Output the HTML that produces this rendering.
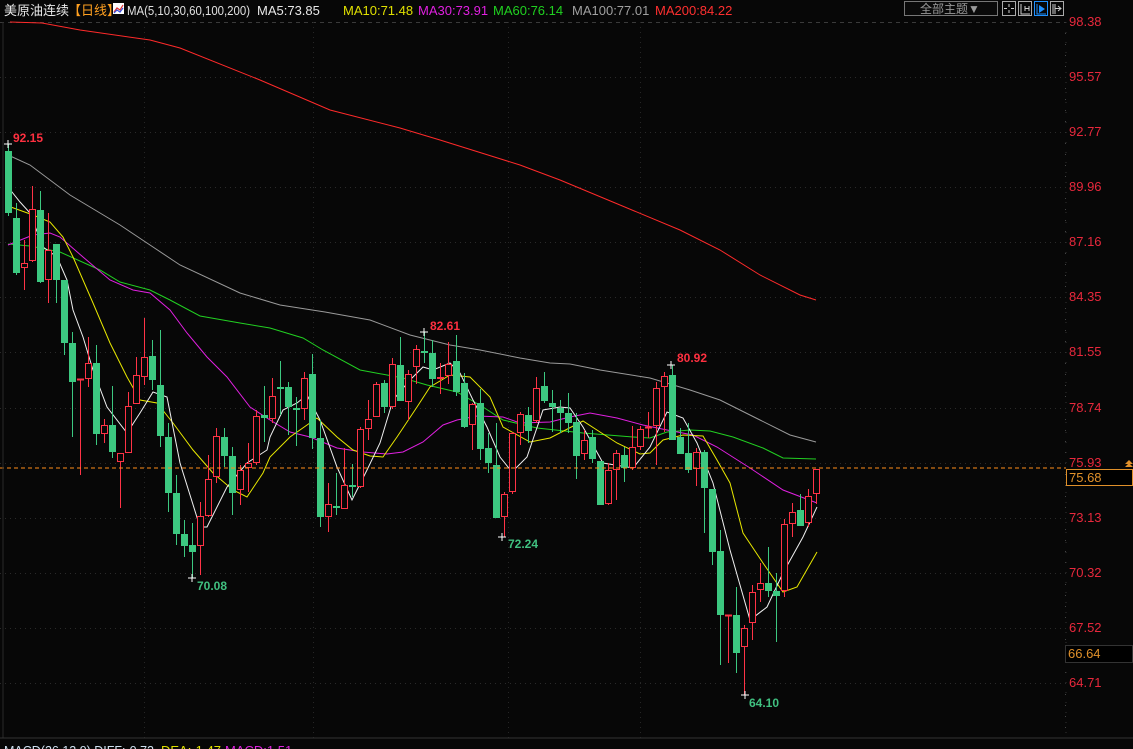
<!DOCTYPE html>
<html><head><meta charset="utf-8"><style>
html,body{margin:0;padding:0;background:#070707;width:1133px;height:749px;overflow:hidden}
svg{display:block}
text{font-family:"Liberation Sans","Noto Sans CJK SC",sans-serif}
</style></head><body>
<svg id="s" width="1133" height="749" xmlns="http://www.w3.org/2000/svg">
<rect width="1133" height="749" fill="#070707"/>
<g id="grid"></g>
<g id="lines"></g>
<g id="candles"></g>
<line x1="0" y1="468" x2="1066" y2="468" stroke="#ff8c1a" stroke-width="1" stroke-dasharray="4,3"/>
<line x1="1066" y1="22" x2="1066" y2="738" stroke="#333" stroke-dasharray="1,9"/>
<line x1="3" y1="22" x2="3" y2="738" stroke="#2a2a2a"/>
<line x1="0" y1="738" x2="1133" y2="738" stroke="#333"/>
<!-- header -->
<text x="4" y="15" font-size="13" fill="#e8e8e8">美原油连续</text>
<text x="68" y="15" font-size="13" fill="#ffa020">【日线】</text>
<rect x="113" y="3" width="11" height="11" fill="#fff"/>
<polyline points="114,12 117,8 120,10 123,5" fill="none" stroke="#e03030" stroke-width="1.2"/>
<polyline points="114,13 117,10 120,12 123,8" fill="none" stroke="#3050e0" stroke-width="1.2"/>
<text x="127" y="15" font-size="13" fill="#e0e0e0" textLength="123" lengthAdjust="spacingAndGlyphs">MA(5,10,30,60,100,200)</text>
<text x="257" y="15" font-size="13" fill="#e8e8e8">MA5:73.85</text>
<text x="343" y="15" font-size="13" fill="#e0e000">MA10:71.48</text>
<text x="418" y="15" font-size="13" fill="#e020e0">MA30:73.91</text>
<text x="493" y="15" font-size="13" fill="#20d020">MA60:76.14</text>
<text x="572" y="15" font-size="13" fill="#a0a0a0">MA100:77.01</text>
<text x="655" y="15" font-size="13" fill="#ff3030">MA200:84.22</text>
<!-- top right -->
<rect x="904.5" y="1.5" width="93" height="14" fill="#0a0a0a" stroke="#777"/>
<text x="920" y="13" font-size="12" fill="#999">全部主题▼</text>
<rect x="1002.5" y="1.5" width="13" height="14" fill="none" stroke="#aaa"/>
<path d="M1009 4v3M1009 10v3M1004 8.5h3M1011 8.5h3" stroke="#ccc"/>
<rect x="1018.5" y="1.5" width="13" height="14" fill="none" stroke="#aaa"/>
<path d="M1021 4v10h9M1025 6v5M1029 6v5M1025 8.5h4" stroke="#ccc" fill="none"/>
<rect x="1034.5" y="1.5" width="13" height="14" fill="none" stroke="#1e90ff"/>
<path d="M1037 4v10h9" stroke="#1e90ff" fill="none"/><path d="M1039 5l6 4-6 4z" fill="#1e90ff"/>
<rect x="1050.5" y="1.5" width="13" height="14" fill="none" stroke="#aaa"/>
<path d="M1053 4v10M1055 4v10M1055 8.5h6M1058 6l3 2.5-3 2.5" stroke="#ccc" fill="none"/>
<g id="axis" font-size="13" fill="#e8283c"></g>
<rect x="1066.5" y="469.5" width="66" height="16" fill="#000" stroke="#e0902a"/>
<text x="1069" y="482" font-size="13" fill="#e0902a">75.68</text>
<path d="M1125 467l4-4 4 4zM1125 464l4-4 4 4z" fill="#e0902a"/>
<rect x="1065.5" y="645.5" width="67" height="17" fill="#000" stroke="#333"/>
<text x="1068" y="658" font-size="13" fill="#e0902a">66.64</text>
<!-- extremes -->
<g font-size="12" font-weight="bold">
<text x="13" y="142" fill="#ff3040">92.15</text>
<text x="430" y="330" fill="#ff3040">82.61</text>
<text x="677" y="362" fill="#ff3040">80.92</text>
<text x="197" y="590" fill="#40c080">70.08</text>
<text x="508" y="548" fill="#40c080">72.24</text>
<text x="749" y="707" fill="#40c080">64.10</text>
</g>
<g stroke="#fff" stroke-width="1">
<path d="M4 144h8M8 140v8M420 332h8M424 328v8M667 365h8M671 361v8M188 578h8M192 574v8M498 537h8M502 533v8M741 695h8M745 691v8"/>
</g>
<text x="4" y="755" font-size="13" fill="#cfe0f0" textLength="150" lengthAdjust="spacingAndGlyphs">MACD(26,12,9) DIFF:-0.72</text>
<text x="161" y="755" font-size="13" fill="#e0e000">DEA:-1.47</text>
<text x="225" y="755" font-size="13" fill="#e020e0">MACD:1.51</text>
</svg>
<script>
var NS="http://www.w3.org/2000/svg";
function el(p,t,a){var e=document.createElementNS(NS,t);for(var k in a)e.setAttribute(k,a[k]);p.appendChild(e);return e;}
var g=document.getElementById('grid');
var labs=["98.38","95.57","92.77","89.96","87.16","84.35","81.55","78.74","75.93","73.13","70.32","67.52","64.71"];
var ax=document.getElementById('axis');
for(var i=0;i<13;i++){var y=Math.round(22+55.08*i);
 el(g,'line',{x1:0,x2:1066,y1:y+.5,y2:y+.5,stroke:i==0?'#3a3a3a':'#2a2a2a','stroke-dasharray':i==0?'4,4':'1,4'});
 var t=el(ax,'text',{x:1069,y:y+4});t.textContent=labs[i];
 for(var j=1;j<5;j++)el(g,'rect',{x:1065,y:y+j*11,width:1,height:1,fill:'#444'});
}
[144,313,508,640].forEach(function(x){el(g,'line',{x1:x+.5,x2:x+.5,y1:22,y2:738,stroke:'#262626','stroke-dasharray':'1,4'});});
var C=[
['g',151,213,144,216],['g',218,273,203,275],['r',263,268,240,290],['r',209,261,186,262],['g',210,282,191,283],
['r',250,280,213,303],['g',244,280,244,303],['g',280,343,280,355],['g',343,382,332,437],['r',379,379,379,475],
['r',363,379,337,387],['g',363,434,345,445],['r',425,434,419,443],['g',425,452,386,458],['r',453,462,453,508],
['r',406,453,392,453],['r',375,404,357,404],['r',357,377,318,385],['g',356,380,340,390],['g',385,436,330,447],
['g',437,493,423,512],['g',493,534,475,545],['g',534,546,520,557],['g',545,552,523,578],['r',516,546,502,575],
['r',479,516,455,517],['r',436,477,428,483],['g',437,456,428,467],['g',456,493,447,515],['r',470,490,465,505],
['r',463,468,443,492],['r',416,463,410,465],['g',415,418,386,442],['r',396,419,378,423],['g',387,388,361,415],
['g',387,407,382,435],['g',408,409,397,446],['r',378,409,372,420],['g',374,438,354,449],['g',438,517,420,527],
['r',504,517,483,532],['g',506,507,473,515],['r',485,509,448,509],['g',485,487,464,497],['r',429,487,427,488],
['r',419,429,400,440],['r',384,417,382,417],['g',383,407,380,413],['r',364,407,358,409],['g',365,401,337,401],
['r',374,402,370,420],['r',349,367,345,384],['g',351,352,332,363],['g',353,379,340,387],['r',377,379,363,394],
['r',364,376,342,384],['g',361,392,335,396],['g',383,427,373,428],['r',404,425,403,450],['g',403,449,389,460],
['g',448,463,433,473],['g',465,518,423,518],['r',494,517,492,537],['r',433,492,432,494],['r',414,433,412,445],
['g',415,431,407,443],['r',388,421,377,423],['g',386,401,372,403],['g',403,407,390,432],['g',408,413,400,433],
['g',413,423,393,433],['g',422,456,413,479],['r',440,454,430,460],['g',437,459,430,463],['g',461,505,461,505],
['r',470,504,463,505],['r',453,470,450,500],['g',455,468,447,482],['r',447,468,426,470],['r',429,447,426,450],
['r',427,427,412,438],['r',388,426,382,465],['r',376,387,372,432],['g',375,440,365,440],['g',437,454,428,454],
['g',453,470,423,473],['r',452,469,448,486],['g',452,488,450,533],['g',489,552,489,565],['g',551,615,530,665],
['r',615,615,615,663],['g',615,653,587,673],['r',628,647,625,695],['r',592,623,585,640],['r',583,590,563,602],
['g',583,591,547,597],['g',591,596,573,642],['r',524,591,519,597],['r',512,524,503,537],['g',510,526,494,526],
['r',496,523,489,527],['r',469,494,469,504]];
var cg=document.getElementById('candles');
C.forEach(function(c,i){var x=8+8*i,col=c[0]=='r'?'#ff3346':'#3cc880';
 var bt=c[1],bb=c[2];
 if(c[0]=='r'){
  el(cg,'line',{x1:x+.5,x2:x+.5,y1:c[3],y2:bt,stroke:col});
  el(cg,'line',{x1:x+.5,x2:x+.5,y1:bb,y2:c[4],stroke:col});
  if(bb-bt<2)el(cg,'line',{x1:x-3,x2:x+4,y1:bt+.5,y2:bt+.5,stroke:col,'stroke-width':2});
  else el(cg,'rect',{x:x-2.5,y:bt+.5,width:6,height:bb-bt-1,fill:'#070707',stroke:col});
 }else{
  el(cg,'line',{x1:x+.5,x2:x+.5,y1:c[3],y2:c[4],stroke:col});
  el(cg,'rect',{x:x-3,y:bt,width:7,height:Math.max(2,bb-bt),fill:col});
 }
});
var L=document.getElementById('lines');
var M={
'#ff2a2a':[[10,22],[42,23],[80,30],[150,40],[180,48],[260,80],[330,110],[400,128],[440,140],[520,165],[560,180],[620,205],[680,230],[720,250],[760,275],[800,295],[816,300]],
'#9a9a9a':[[8,155],[30,165],[70,195],[100,213],[120,225],[150,245],[180,265],[240,293],[280,305],[325,312],[370,320],[410,335],[450,345],[480,350],[520,358],[550,363],[570,364],[600,370],[650,378],[690,390],[720,400],[760,420],[790,435],[816,442]],
'#22d022':[[8,244],[30,246],[60,252],[100,270],[120,282],[150,290],[170,300],[200,316],[240,323],[270,328],[303,338],[323,350],[360,370],[403,378],[427,385],[457,392],[483,407],[503,420],[537,428],[583,433],[633,437],[650,438],[667,432],[690,430],[710,431],[733,437],[763,448],[783,458],[816,459]],
'#e020e0':[[8,245],[33,235],[50,233],[60,237],[83,257],[110,280],[133,290],[150,293],[170,310],[187,333],[207,357],[227,377],[250,407],[270,420],[290,432],[310,437],[337,448],[363,452],[387,454],[403,452],[423,442],[443,425],[457,420],[477,416],[503,417],[520,423],[550,422],[570,417],[590,413],[617,418],[643,425],[667,430],[693,435],[717,447],[750,468],[783,490],[817,503]],
'#e8e800':[[8,206],[33,215],[50,222],[63,237],[73,257],[93,303],[110,343],[127,377],[140,400],[157,403],[173,423],[193,450],[213,473],[233,490],[247,497],[263,473],[270,457],[290,437],[317,418],[337,437],[353,450],[370,456],[383,457],[397,437],[417,407],[430,387],[450,375],[470,377],[490,397],[503,427],[530,442],[550,438],[583,421],[600,432],[617,443],[640,454],[650,453],[663,440],[683,435],[703,436],[717,460],[730,483],[743,533],[763,563],[783,592],[797,587],[817,552]],
'#f0f0f0':[[8,187],[20,202],[30,213],[43,247],[57,257],[67,280],[73,310],[83,337],[93,370],[107,407],[127,433],[140,413],[153,392],[167,397],[180,463],[200,527],[207,527],[227,487],[247,463],[267,450],[270,437],[283,410],[297,403],[307,395],[320,420],[337,467],[352,500],[367,470],[380,443],[393,400],[410,380],[423,367],[433,370],[450,363],[460,373],[473,400],[487,427],[500,457],[512,472],[527,457],[543,410],[560,407],[570,408],[583,427],[603,463],[633,468],[650,447],[667,412],[683,418],[697,443],[713,483],[730,550],[750,620],[767,607],[783,573],[803,537],[817,507]]};
for(var k in M){el(L,'polyline',{points:M[k].map(function(p){return p.join(',')}).join(' '),fill:'none',stroke:k,'stroke-width':1});}
</script>
</body></html>
